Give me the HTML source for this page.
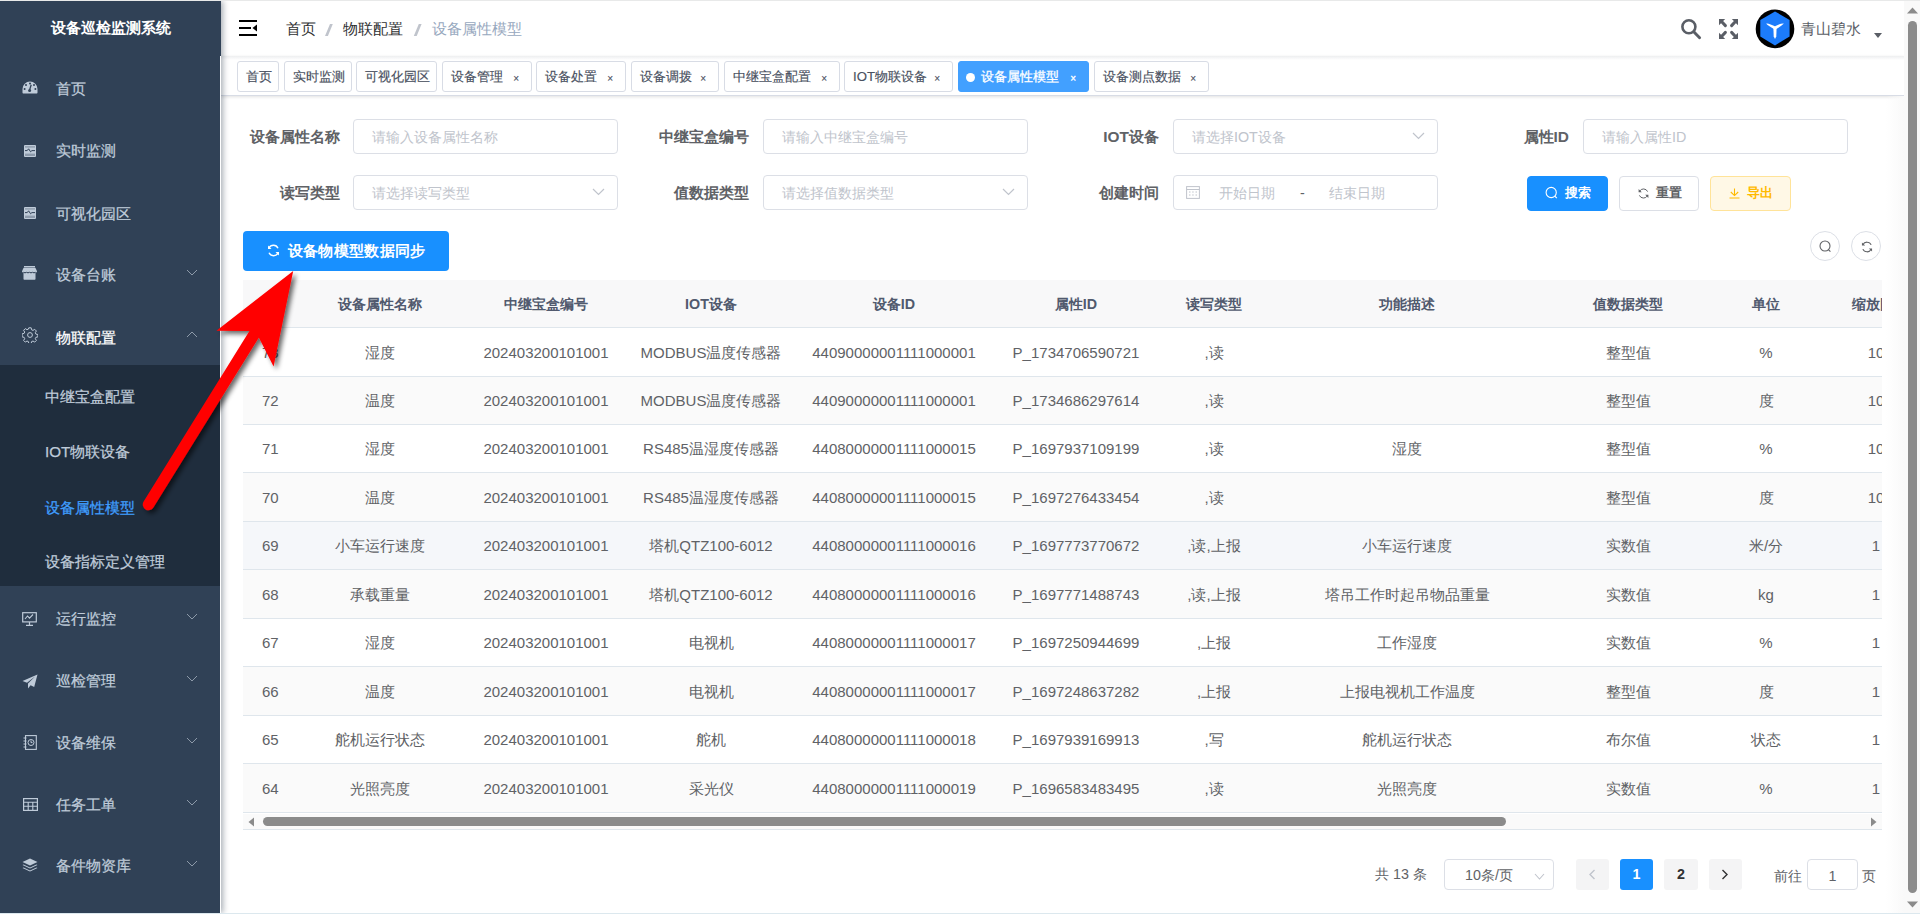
<!DOCTYPE html><html><head><meta charset="utf-8"><title>设备属性模型</title><style>

*{box-sizing:border-box;margin:0;padding:0}
html,body{width:1920px;height:914px;overflow:hidden;background:#fff;font-family:"Liberation Sans", sans-serif;}
.abs{position:absolute}
.t{position:absolute;white-space:nowrap}
#side{position:absolute;left:0;top:1px;width:221px;height:912px;background:#304156;box-shadow:2px 0 6px rgba(0,21,41,.35);z-index:2;overflow:hidden}
.mi{position:absolute;left:0;width:220px;color:#bfcbd9;font-size:15.2px;height:30px;line-height:30px;-webkit-text-stroke:0.25px currentColor}
.mi .tx{position:absolute;left:56px;top:0;white-space:nowrap}
.mi svg.ic{position:absolute;left:22px}
.mi svg.arr{position:absolute;left:186px}
.sub{position:absolute;left:45px;color:#bfcbd9;font-size:15.2px;white-space:nowrap;height:30px;line-height:30px;-webkit-text-stroke:0.25px currentColor}
.tab{position:absolute;top:61px;height:31px;border:1px solid #d8dce5;border-radius:3px;background:#fff;color:#495060;font-size:13.2px;line-height:29px;-webkit-text-stroke:0.15px currentColor;white-space:nowrap;padding-left:8px}
.tab .x{position:absolute;top:2px;font-size:10px;color:#495060}
.lbl{position:absolute;color:#606266;font-weight:bold;font-size:15.4px;white-space:nowrap;text-align:right;height:30px;line-height:30px}
.inp{position:absolute;height:35px;border:1px solid #dcdfe6;border-radius:4px;background:#fff;color:#c0c4cc;font-size:14.3px;line-height:35px;padding-left:18px;white-space:nowrap}
.btn{position:absolute;top:176px;height:35px;border-radius:4px;font-size:13.2px;font-weight:bold;line-height:32px;white-space:nowrap}
.th{position:absolute;color:#515a6e;font-weight:bold;font-size:14.3px;white-space:nowrap;text-align:center;height:30px;line-height:30px}
.td{position:absolute;color:#606266;font-size:15px;white-space:nowrap;text-align:center;height:30px;line-height:30px}
.pg{position:absolute;top:859px;height:31px;border-radius:3px;background:#f4f4f5;color:#303133;font-weight:bold;font-size:14.3px;line-height:31px;text-align:center}

</style></head><body>
<div class="abs" style="left:0;top:0;width:1920px;height:1px;background:#e8e9e9;z-index:5"></div>
<div class="abs" style="left:0;top:913px;width:1920px;height:1px;background:#dce8ee;z-index:5"></div>
<div id="side">
<div class="t" style="left:0;width:221px;top:0;height:54px;line-height:54px;text-align:center;color:#fff;font-weight:bold;font-size:15.4px">设备巡检监测系统</div>
<div class="abs" style="left:0;top:363.5px;width:220px;height:221px;background:#1f2d3d"></div>
<div class="mi" style="top:73.0px;color:#bfcbd9"><svg class="ic" width="16" height="13" viewBox="0 0 16 13" style="top:7px"><path d="M8 0.5A7.5 7.5 0 0 0 0.5 8v3.5c0 .6.4 1 1 1h13c.6 0 1-.4 1-1V8A7.5 7.5 0 0 0 8 0.5z" fill="#bfcbd9"/><path d="M9.2 3.8L7.6 9" stroke="#304156" stroke-width="1.3"/><circle cx="7.6" cy="9.6" r="1.5" fill="#304156"/><circle cx="2.6" cy="8" r="1" fill="#304156"/><circle cx="13.4" cy="8" r="1" fill="#304156"/><circle cx="4" cy="4" r="1" fill="#304156"/><circle cx="12" cy="4" r="1" fill="#304156"/><circle cx="8" cy="2.4" r="1" fill="#304156"/></svg><span class="tx">首页</span></div>
<div class="mi" style="top:135.0px;color:#bfcbd9"><svg class="ic" width="12" height="12" viewBox="0 0 12 12" style="top:8.8px;left:24px"><rect x="0" y="0" width="12" height="12" rx="1" fill="#bfcbd9"/><rect x="1" y="1.6" width="10" height="0.7" fill="#304156" opacity=".7"/><path d="M1 5.6h2.2l1.4-1.8 2 3 1.3-1.2H11" stroke="#304156" stroke-width="1" fill="none"/><rect x="1" y="8.6" width="10" height="2.4" fill="#8d9aab"/></svg><span class="tx">实时监测</span></div>
<div class="mi" style="top:197.6px;color:#bfcbd9"><svg class="ic" width="12" height="12" viewBox="0 0 12 12" style="top:8.8px;left:24px"><rect x="0" y="0" width="12" height="12" rx="1" fill="#bfcbd9"/><rect x="1" y="1.6" width="10" height="0.7" fill="#304156" opacity=".7"/><path d="M1 5.6h2.2l1.4-1.8 2 3 1.3-1.2H11" stroke="#304156" stroke-width="1" fill="none"/><rect x="1" y="8.6" width="10" height="2.4" fill="#8d9aab"/></svg><span class="tx">可视化园区</span></div>
<div class="mi" style="top:259.0px;color:#bfcbd9"><svg class="ic" width="15" height="14" viewBox="0 0 15 14" style="top:6px"><path d="M2 0h11v1.4H2z" fill="#bfcbd9"/><path d="M1.6 1.8h11.8L15 5.2v1H0v-1z" fill="#bfcbd9"/><path d="M1.5 6.2h12v6.8c0 .4-.3.7-.7.7H2.2c-.4 0-.7-.3-.7-.7z" fill="#bfcbd9"/><path d="M1.5 6.2q1.5 1.8 3 0q1.5 1.8 3 0q1.5 1.8 3 0q1.5 1.8 3 0" fill="#304156" stroke="#304156" stroke-width=".6"/></svg><span class="tx">设备台账</span><svg class="arr" width="12" height="7" viewBox="0 0 12 7" style="top:9px"><path d="M1 1l5 5 5-5" fill="none" stroke="#8d9aa9" stroke-width="1"/></svg></div>
<div class="mi" style="top:321.5px;color:#fff"><svg class="ic" width="16" height="16" viewBox="0 0 16 16" style="top:4.5px"><path d="M6.8 0.8h2.4l.4 2 1.4.6 1.7-1.1 1.7 1.7-1.1 1.7.6 1.4 2 .4v2.4l-2 .4-.6 1.4 1.1 1.7-1.7 1.7-1.7-1.1-1.4.6-.4 2H6.8l-.4-2-1.4-.6-1.7 1.1-1.7-1.7 1.1-1.7-.6-1.4-2-.4V6.8l2-.4.6-1.4-1.1-1.7 1.7-1.7 1.7 1.1 1.4-.6z" fill="none" stroke="#bfcbd9" stroke-width="1" stroke-linejoin="round"/><circle cx="8" cy="8" r="2.4" fill="none" stroke="#bfcbd9" stroke-width="1"/></svg><span class="tx">物联配置</span><svg class="arr" width="12" height="7" viewBox="0 0 12 7" style="top:8px"><path d="M1 6l5-5 5 5" fill="none" stroke="#8d9aa9" stroke-width="1"/></svg></div>
<div class="mi" style="top:603.0px;color:#bfcbd9"><svg class="ic" width="15" height="14" viewBox="0 0 15 14" style="top:8px"><rect x="0.7" y="0.7" width="13.6" height="9.2" fill="none" stroke="#bfcbd9" stroke-width="1.2"/><path d="M3 7l2.5-3 2 2.2L11 2.5" fill="none" stroke="#bfcbd9" stroke-width="1.1"/><path d="M7.5 10v3M4 13.3h7" stroke="#bfcbd9" stroke-width="1.2"/></svg><span class="tx">运行监控</span><svg class="arr" width="12" height="7" viewBox="0 0 12 7" style="top:9px"><path d="M1 1l5 5 5-5" fill="none" stroke="#8d9aa9" stroke-width="1"/></svg></div>
<div class="mi" style="top:665.0px;color:#bfcbd9"><svg class="ic" width="16" height="15" viewBox="0 0 16 15" style="top:7.5px"><path d="M15.5 0.5L0.5 7l4.5 1.8L13 2.5 6 9.5v5l2.6-3.3 3.6 1.8z" fill="#bfcbd9"/></svg><span class="tx">巡检管理</span><svg class="arr" width="12" height="7" viewBox="0 0 12 7" style="top:9px"><path d="M1 1l5 5 5-5" fill="none" stroke="#8d9aa9" stroke-width="1"/></svg></div>
<div class="mi" style="top:727.0px;color:#bfcbd9"><svg class="ic" width="14" height="15" viewBox="0 0 14 15" style="top:7px;left:23px"><rect x="2.5" y="0.6" width="10.8" height="13.8" fill="none" stroke="#bfcbd9" stroke-width="1.1"/><path d="M0.5 3h3M0.5 6h3M0.5 9h3M0.5 12h3" stroke="#bfcbd9" stroke-width="1"/><circle cx="8" cy="7.5" r="3" fill="none" stroke="#bfcbd9" stroke-width="1"/><path d="M8 5.6v2h1.5" stroke="#bfcbd9" stroke-width="1" fill="none"/></svg><span class="tx">设备维保</span><svg class="arr" width="12" height="7" viewBox="0 0 12 7" style="top:9px"><path d="M1 1l5 5 5-5" fill="none" stroke="#8d9aa9" stroke-width="1"/></svg></div>
<div class="mi" style="top:789.0px;color:#bfcbd9"><svg class="ic" width="15" height="13" viewBox="0 0 15 13" style="top:8px;left:22.5px"><rect x="0.6" y="0.6" width="13.8" height="11.8" fill="none" stroke="#bfcbd9" stroke-width="1.2"/><path d="M0.6 4.2h13.8M0.6 8.2h13.8M5.2 4.2v8.2M9.8 4.2v8.2" stroke="#bfcbd9" stroke-width="1.1"/></svg><span class="tx">任务工单</span><svg class="arr" width="12" height="7" viewBox="0 0 12 7" style="top:9px"><path d="M1 1l5 5 5-5" fill="none" stroke="#8d9aa9" stroke-width="1"/></svg></div>
<div class="mi" style="top:850.0px;color:#bfcbd9"><svg class="ic" width="16" height="15" viewBox="0 0 16 15" style="top:7px"><path d="M8 0.5l7.5 3.5L8 7.5 0.5 4z" fill="#bfcbd9"/><path d="M1.6 6.4L8 9.4l6.4-3 1.1.6L8 10.5 0.5 7z" fill="#bfcbd9"/><path d="M1.6 9.4L8 12.4l6.4-3 1.1.6L8 13.5 0.5 10z" fill="#bfcbd9"/></svg><span class="tx">备件物资库</span><svg class="arr" width="12" height="7" viewBox="0 0 12 7" style="top:9px"><path d="M1 1l5 5 5-5" fill="none" stroke="#8d9aa9" stroke-width="1"/></svg></div>
<div class="sub" style="top:381.0px;color:#bfcbd9">中继宝盒配置</div>
<div class="sub" style="top:436.0px;color:#bfcbd9">IOT物联设备</div>
<div class="sub" style="top:491.5px;color:#409eff">设备属性模型</div>
<div class="sub" style="top:546.0px;color:#bfcbd9">设备指标定义管理</div>
<div class="abs" style="left:220px;top:55px;width:1px;height:860px;background:#fff"></div>
</div>
<svg class="abs" style="left:239px;top:20px" width="18" height="16" viewBox="0 0 18 16"><rect x="0" y="0" width="18" height="2" fill="#000"/><rect x="0" y="7" width="12" height="2" fill="#000"/><rect x="0" y="14" width="18" height="2" fill="#000"/><path d="M18 4.5v7L13.5 8z" fill="#000"/></svg>
<div class="t" style="left:286px;top:14px;height:30px;line-height:30px;font-size:15.4px;color:#303133">首页</div>
<svg class="abs" style="left:0;top:0" width="440" height="40"><path d="M330 24h2.8L327.9 36H325z" fill="#c0c4cc"/><path d="M418.8 24h2.8L416.7 36H413.8z" fill="#c0c4cc"/></svg>
<div class="t" style="left:343px;top:14px;height:30px;line-height:30px;font-size:15.4px;color:#303133">物联配置</div>
<div class="t" style="left:431.5px;top:14px;height:30px;line-height:30px;font-size:15.4px;color:#97a8be">设备属性模型</div>
<svg class="abs" style="left:1679px;top:17px" width="24" height="24" viewBox="0 0 24 24"><circle cx="9.9" cy="9.8" r="6.5" fill="none" stroke="#5a5e66" stroke-width="2.6"/><path d="M15 15l5.6 5.8" stroke="#5a5e66" stroke-width="2.9" stroke-linecap="round"/></svg>
<svg class="abs" style="left:1719px;top:19px" width="19" height="20" viewBox="0 0 19 20"><g fill="#5a5e66"><path d="M0 0h6.2L0 6.2z"/><path d="M19 0h-6.2l6.2 6.2z"/><path d="M0 20v-6.2l6.2 6.2z"/><path d="M19 20v-6.2l-6.2 6.2z"/></g><g stroke="#5a5e66" stroke-width="3" stroke-linecap="round"><path d="M3 3l3.4 3.6"/><path d="M16 3l-3.4 3.6"/><path d="M3 17l3.4-3.6"/><path d="M16 17l-3.4-3.6"/></g></svg>
<svg class="abs" style="left:1755px;top:8.5px" width="40" height="40" viewBox="0 0 40 40"><circle cx="20" cy="19.9" r="19.3" fill="#000"/><path d="M20 2.4L34.6 10.9V27.5L20 36.4 5.3 27.5V10.9z" fill="#1c7cfb"/><path d="M11.2 14.5Q13.5 13.8 21.2 17.9L20.3 20.8Q12.5 16.5 11.2 14.5z" fill="#fff"/><path d="M28.8 14.5Q26.5 13.8 18.8 17.9L19.7 20.8Q27.5 16.5 28.8 14.5z" fill="#fff"/><path d="M18.4 19h3.2L21.3 27.6 20 30 18.7 27.6z" fill="#fff"/></svg>
<div class="t" style="left:1801px;top:14px;height:30px;line-height:30px;font-size:15.4px;color:#5a5e66">青山碧水</div>
<svg class="abs" style="left:1873.5px;top:33px" width="8" height="5" viewBox="0 0 8 5"><path d="M0 0h8L4 5z" fill="#5a5e66"/></svg>
<div class="abs" style="left:221px;top:56px;width:1683px;height:4px;background:linear-gradient(rgba(0,21,41,.07),rgba(0,21,41,0));z-index:1"></div>
<div class="abs" style="left:221px;top:56px;width:1683px;height:40px;background:#fff;border-bottom:1px solid #d8dce5;box-shadow:0 1px 3px 0 rgba(0,0,0,.12)"></div>
<div class="tab" style="left:237px;width:42px">首页</div>
<div class="tab" style="left:284px;width:68px">实时监测</div>
<div class="tab" style="left:356px;width:81px">可视化园区</div>
<div class="tab" style="left:442px;width:90px">设备管理<span class="x" style="right:12px">×</span></div>
<div class="tab" style="left:536px;width:90px">设备处置<span class="x" style="right:12px">×</span></div>
<div class="tab" style="left:631px;width:88px">设备调拨<span class="x" style="right:12px">×</span></div>
<div class="tab" style="left:724px;width:116px">中继宝盒配置<span class="x" style="right:12px">×</span></div>
<div class="tab" style="left:844px;width:109px">IOT物联设备<span class="x" style="right:12px">×</span></div>
<div class="tab" style="left:958px;width:131px;background:#42a0ff;border-color:#42a0ff;color:#fff;padding-left:22px;-webkit-text-stroke:0.3px #fff"><span class="abs" style="left:7px;top:11px;width:9px;height:9px;border-radius:50%;background:#fff"></span>设备属性模型<span class="x" style="right:12px;color:#fff">×</span></div>
<div class="tab" style="left:1094px;width:115px">设备测点数据<span class="x" style="right:12px">×</span></div>
<div class="lbl" style="left:140px;width:200px;top:121.5px">设备属性名称</div>
<div class="inp" style="left:353px;width:265px;top:119.0px">请输入设备属性名称</div>
<div class="lbl" style="left:549px;width:200px;top:121.5px">中继宝盒编号</div>
<div class="inp" style="left:763px;width:265px;top:119.0px">请输入中继宝盒编号</div>
<div class="lbl" style="left:959px;width:200px;top:121.5px">IOT设备</div>
<div class="inp" style="left:1173px;width:265px;top:119.0px">请选择IOT设备<svg class="abs" style="right:12px;top:12px" width="13" height="8" viewBox="0 0 13 8"><path d="M1 1l5.5 5.5L12 1" fill="none" stroke="#c0c4cc" stroke-width="1.2"/></svg></div>
<div class="lbl" style="left:1369px;width:200px;top:121.5px">属性ID</div>
<div class="inp" style="left:1583px;width:265px;top:119.0px">请输入属性ID</div>
<div class="lbl" style="left:140px;width:200px;top:177.5px">读写类型</div>
<div class="inp" style="left:353px;width:265px;top:175.0px">请选择读写类型<svg class="abs" style="right:12px;top:12px" width="13" height="8" viewBox="0 0 13 8"><path d="M1 1l5.5 5.5L12 1" fill="none" stroke="#c0c4cc" stroke-width="1.2"/></svg></div>
<div class="lbl" style="left:549px;width:200px;top:177.5px">值数据类型</div>
<div class="inp" style="left:763px;width:265px;top:175.0px">请选择值数据类型<svg class="abs" style="right:12px;top:12px" width="13" height="8" viewBox="0 0 13 8"><path d="M1 1l5.5 5.5L12 1" fill="none" stroke="#c0c4cc" stroke-width="1.2"/></svg></div>
<div class="lbl" style="left:959px;width:200px;top:177.5px">创建时间</div>
<div class="inp" style="left:1173px;width:265px;top:175.0px;padding-left:0"><svg class="abs" style="left:11.5px;top:9px" width="14" height="14" viewBox="0 0 14 14"><rect x="0.6" y="1.6" width="12.8" height="11.8" fill="none" stroke="#c0c4cc" stroke-width="1"/><path d="M0.6 4.5h12.8" stroke="#c0c4cc"/><path d="M3 7h1.5M6.2 7h1.5M9.5 7h1.5M3 10h1.5M6.2 10h1.5M9.5 10h1.5" stroke="#c0c4cc"/></svg><span class="abs" style="left:45px;top:0">开始日期</span><span class="abs" style="left:126px;top:0;color:#606266">-</span><span class="abs" style="left:155px;top:0">结束日期</span></div>
<div class="btn" style="left:1527px;width:81px;background:#1890ff;border:1px solid #1890ff;color:#fff;padding-left:36.5px"><svg class="abs" style="left:16px;top:8px" width="16" height="16" viewBox="0 0 16 16"><circle cx="7.2" cy="7.5" r="5.1" fill="none" stroke="#fff" stroke-width="1.1"/><path d="M10.8 11.2l2 2" stroke="#fff" stroke-width="1.2"/></svg>搜索</div>
<div class="btn" style="left:1619px;width:80px;background:#fff;border:1px solid #dcdfe6;color:#606266;padding-left:35.5px"><svg class="abs" style="left:17.5px;top:10.5px" width="11" height="11" viewBox="0 0 11 11"><path d="M9.6 3.6A4.5 4.5 0 0 0 1.6 3.2M1.4 7.4A4.5 4.5 0 0 0 9.4 7.8" fill="none" stroke="#606266" stroke-width="1"/><path d="M0.6 1v3.2h3.2z" fill="#606266"/><path d="M10.4 10V6.8H7.2z" fill="#606266"/></svg>重置</div>
<div class="btn" style="left:1710px;width:81px;background:#fff8e6;border:1px solid #ffe399;color:#ffba00;padding-left:35.5px"><svg class="abs" style="left:17.5px;top:11px" width="11" height="11" viewBox="0 0 11 11"><path d="M5.5 0.5v6.8M1.8 4l3.7 3.6L9.2 4M0.5 10h10" fill="none" stroke="#ffba00" stroke-width="1.1"/></svg>导出</div>
<div class="abs" style="left:243px;top:231px;width:206px;height:40px;background:#1890ff;border-radius:4px;color:#fff;font-size:15px;font-weight:bold;line-height:40px;padding-left:44.5px;letter-spacing:0.35px;white-space:nowrap"><svg class="abs" style="left:24px;top:13px" width="13" height="13" viewBox="0 0 13 13"><path d="M11 4.2A5 5 0 0 0 2 4M2 8.8A5 5 0 0 0 11 9" fill="none" stroke="#fff" stroke-width="1.4"/><path d="M1 1.5v3.5h3.5z" fill="#fff"/><path d="M12 11.5V8H8.5z" fill="#fff"/></svg>设备物模型数据同步</div>
<div class="abs" style="left:1810px;top:231px;width:30px;height:30px;border:1px solid #dcdfe6;border-radius:50%;background:#fff"><svg class="abs" style="left:8px;top:8px" width="13" height="13" viewBox="0 0 13 13"><circle cx="6" cy="6" r="5" fill="none" stroke="#606266" stroke-width="1.1"/><path d="M9.4 9.6l2 2" stroke="#606266" stroke-width="1.1"/></svg></div>
<div class="abs" style="left:1851px;top:231px;width:30px;height:30px;border:1px solid #dcdfe6;border-radius:50%;background:#fff"><svg class="abs" style="left:8.5px;top:8.5px" width="12" height="12" viewBox="0 0 13 13"><path d="M11 4.2A5 5 0 0 0 2 4M2 8.8A5 5 0 0 0 11 9" fill="none" stroke="#606266" stroke-width="1.2"/><path d="M1 1.5v3.5h3.5z" fill="#606266"/><path d="M12 11.5V8H8.5z" fill="#606266"/></svg></div>
<div class="abs" style="left:243px;top:280px;width:1639px;height:550px;overflow:hidden">
<div class="abs" style="left:0;top:0;width:1639px;height:48px;background:#f8f8f9;border-bottom:1px solid #dfe6ec"></div>
<div class="th" style="left:37px;width:200px;top:8.5px">设备属性名称</div>
<div class="th" style="left:203px;width:200px;top:8.5px">中继宝盒编号</div>
<div class="th" style="left:368px;width:200px;top:8.5px">IOT设备</div>
<div class="th" style="left:551px;width:200px;top:8.5px">设备ID</div>
<div class="th" style="left:733px;width:200px;top:8.5px">属性ID</div>
<div class="th" style="left:871px;width:200px;top:8.5px">读写类型</div>
<div class="th" style="left:1064px;width:200px;top:8.5px">功能描述</div>
<div class="th" style="left:1285px;width:200px;top:8.5px">值数据类型</div>
<div class="th" style="left:1423px;width:200px;top:8.5px">单位</div>
<div class="th" style="left:1537px;width:200px;top:8.5px">缩放因子</div>
<div class="abs" style="left:0;top:48px;width:1639px;height:49px;background:#fff;border-bottom:1px solid #dfe6ec"></div>
<div class="td" style="left:19px;top:57.5px;text-align:left">73</div>
<div class="td" style="left:37px;width:200px;top:57.5px">湿度</div>
<div class="td" style="left:203px;width:200px;top:57.5px">202403200101001</div>
<div class="td" style="left:368px;width:200px;top:57.5px">MODBUS温度传感器</div>
<div class="td" style="left:551px;width:200px;top:57.5px">44090000001111000001</div>
<div class="td" style="left:733px;width:200px;top:57.5px">P_1734706590721</div>
<div class="td" style="left:871px;width:200px;top:57.5px">,读</div>
<div class="td" style="left:1285px;width:200px;top:57.5px">整型值</div>
<div class="td" style="left:1423px;width:200px;top:57.5px">%</div>
<div class="td" style="left:1533px;width:200px;top:57.5px">10</div>
<div class="abs" style="left:0;top:97px;width:1639px;height:48px;background:#fafafa;border-bottom:1px solid #dfe6ec"></div>
<div class="td" style="left:19px;top:106.0px;text-align:left">72</div>
<div class="td" style="left:37px;width:200px;top:106.0px">温度</div>
<div class="td" style="left:203px;width:200px;top:106.0px">202403200101001</div>
<div class="td" style="left:368px;width:200px;top:106.0px">MODBUS温度传感器</div>
<div class="td" style="left:551px;width:200px;top:106.0px">44090000001111000001</div>
<div class="td" style="left:733px;width:200px;top:106.0px">P_1734686297614</div>
<div class="td" style="left:871px;width:200px;top:106.0px">,读</div>
<div class="td" style="left:1285px;width:200px;top:106.0px">整型值</div>
<div class="td" style="left:1423px;width:200px;top:106.0px">度</div>
<div class="td" style="left:1533px;width:200px;top:106.0px">10</div>
<div class="abs" style="left:0;top:145px;width:1639px;height:48px;background:#fff;border-bottom:1px solid #dfe6ec"></div>
<div class="td" style="left:19px;top:154.0px;text-align:left">71</div>
<div class="td" style="left:37px;width:200px;top:154.0px">湿度</div>
<div class="td" style="left:203px;width:200px;top:154.0px">202403200101001</div>
<div class="td" style="left:368px;width:200px;top:154.0px">RS485温湿度传感器</div>
<div class="td" style="left:551px;width:200px;top:154.0px">44080000001111000015</div>
<div class="td" style="left:733px;width:200px;top:154.0px">P_1697937109199</div>
<div class="td" style="left:871px;width:200px;top:154.0px">,读</div>
<div class="td" style="left:1064px;width:200px;top:154.0px">湿度</div>
<div class="td" style="left:1285px;width:200px;top:154.0px">整型值</div>
<div class="td" style="left:1423px;width:200px;top:154.0px">%</div>
<div class="td" style="left:1533px;width:200px;top:154.0px">10</div>
<div class="abs" style="left:0;top:193px;width:1639px;height:49px;background:#fafafa;border-bottom:1px solid #dfe6ec"></div>
<div class="td" style="left:19px;top:202.5px;text-align:left">70</div>
<div class="td" style="left:37px;width:200px;top:202.5px">温度</div>
<div class="td" style="left:203px;width:200px;top:202.5px">202403200101001</div>
<div class="td" style="left:368px;width:200px;top:202.5px">RS485温湿度传感器</div>
<div class="td" style="left:551px;width:200px;top:202.5px">44080000001111000015</div>
<div class="td" style="left:733px;width:200px;top:202.5px">P_1697276433454</div>
<div class="td" style="left:871px;width:200px;top:202.5px">,读</div>
<div class="td" style="left:1285px;width:200px;top:202.5px">整型值</div>
<div class="td" style="left:1423px;width:200px;top:202.5px">度</div>
<div class="td" style="left:1533px;width:200px;top:202.5px">10</div>
<div class="abs" style="left:0;top:242px;width:1639px;height:48px;background:#f5f7fa;border-bottom:1px solid #dfe6ec"></div>
<div class="td" style="left:19px;top:251.0px;text-align:left">69</div>
<div class="td" style="left:37px;width:200px;top:251.0px">小车运行速度</div>
<div class="td" style="left:203px;width:200px;top:251.0px">202403200101001</div>
<div class="td" style="left:368px;width:200px;top:251.0px">塔机QTZ100-6012</div>
<div class="td" style="left:551px;width:200px;top:251.0px">44080000001111000016</div>
<div class="td" style="left:733px;width:200px;top:251.0px">P_1697773770672</div>
<div class="td" style="left:871px;width:200px;top:251.0px">,读,上报</div>
<div class="td" style="left:1064px;width:200px;top:251.0px">小车运行速度</div>
<div class="td" style="left:1285px;width:200px;top:251.0px">实数值</div>
<div class="td" style="left:1423px;width:200px;top:251.0px">米/分</div>
<div class="td" style="left:1533px;width:200px;top:251.0px">1</div>
<div class="abs" style="left:0;top:290px;width:1639px;height:49px;background:#fafafa;border-bottom:1px solid #dfe6ec"></div>
<div class="td" style="left:19px;top:299.5px;text-align:left">68</div>
<div class="td" style="left:37px;width:200px;top:299.5px">承载重量</div>
<div class="td" style="left:203px;width:200px;top:299.5px">202403200101001</div>
<div class="td" style="left:368px;width:200px;top:299.5px">塔机QTZ100-6012</div>
<div class="td" style="left:551px;width:200px;top:299.5px">44080000001111000016</div>
<div class="td" style="left:733px;width:200px;top:299.5px">P_1697771488743</div>
<div class="td" style="left:871px;width:200px;top:299.5px">,读,上报</div>
<div class="td" style="left:1064px;width:200px;top:299.5px">塔吊工作时起吊物品重量</div>
<div class="td" style="left:1285px;width:200px;top:299.5px">实数值</div>
<div class="td" style="left:1423px;width:200px;top:299.5px">kg</div>
<div class="td" style="left:1533px;width:200px;top:299.5px">1</div>
<div class="abs" style="left:0;top:339px;width:1639px;height:48px;background:#fff;border-bottom:1px solid #dfe6ec"></div>
<div class="td" style="left:19px;top:348.0px;text-align:left">67</div>
<div class="td" style="left:37px;width:200px;top:348.0px">湿度</div>
<div class="td" style="left:203px;width:200px;top:348.0px">202403200101001</div>
<div class="td" style="left:368px;width:200px;top:348.0px">电视机</div>
<div class="td" style="left:551px;width:200px;top:348.0px">44080000001111000017</div>
<div class="td" style="left:733px;width:200px;top:348.0px">P_1697250944699</div>
<div class="td" style="left:871px;width:200px;top:348.0px">,上报</div>
<div class="td" style="left:1064px;width:200px;top:348.0px">工作湿度</div>
<div class="td" style="left:1285px;width:200px;top:348.0px">实数值</div>
<div class="td" style="left:1423px;width:200px;top:348.0px">%</div>
<div class="td" style="left:1533px;width:200px;top:348.0px">1</div>
<div class="abs" style="left:0;top:387px;width:1639px;height:49px;background:#fafafa;border-bottom:1px solid #dfe6ec"></div>
<div class="td" style="left:19px;top:396.5px;text-align:left">66</div>
<div class="td" style="left:37px;width:200px;top:396.5px">温度</div>
<div class="td" style="left:203px;width:200px;top:396.5px">202403200101001</div>
<div class="td" style="left:368px;width:200px;top:396.5px">电视机</div>
<div class="td" style="left:551px;width:200px;top:396.5px">44080000001111000017</div>
<div class="td" style="left:733px;width:200px;top:396.5px">P_1697248637282</div>
<div class="td" style="left:871px;width:200px;top:396.5px">,上报</div>
<div class="td" style="left:1064px;width:200px;top:396.5px">上报电视机工作温度</div>
<div class="td" style="left:1285px;width:200px;top:396.5px">整型值</div>
<div class="td" style="left:1423px;width:200px;top:396.5px">度</div>
<div class="td" style="left:1533px;width:200px;top:396.5px">1</div>
<div class="abs" style="left:0;top:436px;width:1639px;height:48px;background:#fff;border-bottom:1px solid #dfe6ec"></div>
<div class="td" style="left:19px;top:445.0px;text-align:left">65</div>
<div class="td" style="left:37px;width:200px;top:445.0px">舵机运行状态</div>
<div class="td" style="left:203px;width:200px;top:445.0px">202403200101001</div>
<div class="td" style="left:368px;width:200px;top:445.0px">舵机</div>
<div class="td" style="left:551px;width:200px;top:445.0px">44080000001111000018</div>
<div class="td" style="left:733px;width:200px;top:445.0px">P_1697939169913</div>
<div class="td" style="left:871px;width:200px;top:445.0px">,写</div>
<div class="td" style="left:1064px;width:200px;top:445.0px">舵机运行状态</div>
<div class="td" style="left:1285px;width:200px;top:445.0px">布尔值</div>
<div class="td" style="left:1423px;width:200px;top:445.0px">状态</div>
<div class="td" style="left:1533px;width:200px;top:445.0px">1</div>
<div class="abs" style="left:0;top:484px;width:1639px;height:49px;background:#fafafa;border-bottom:1px solid #dfe6ec"></div>
<div class="td" style="left:19px;top:493.5px;text-align:left">64</div>
<div class="td" style="left:37px;width:200px;top:493.5px">光照亮度</div>
<div class="td" style="left:203px;width:200px;top:493.5px">202403200101001</div>
<div class="td" style="left:368px;width:200px;top:493.5px">采光仪</div>
<div class="td" style="left:551px;width:200px;top:493.5px">44080000001111000019</div>
<div class="td" style="left:733px;width:200px;top:493.5px">P_1696583483495</div>
<div class="td" style="left:871px;width:200px;top:493.5px">,读</div>
<div class="td" style="left:1064px;width:200px;top:493.5px">光照亮度</div>
<div class="td" style="left:1285px;width:200px;top:493.5px">实数值</div>
<div class="td" style="left:1423px;width:200px;top:493.5px">%</div>
<div class="td" style="left:1533px;width:200px;top:493.5px">1</div>
<div class="abs" style="left:0;top:533.5px;width:1639px;height:16px;background:#fafafa;border-bottom:1px solid #dfe6ec"></div>
<div class="abs" style="left:20px;top:537px;width:1243px;height:9px;border-radius:5px;background:#8b8b8b"></div>
<svg class="abs" style="left:5px;top:537px" width="7" height="10" viewBox="0 0 7 10"><path d="M6 0.5v9L0.5 5z" fill="#8b8b8b"/></svg>
<svg class="abs" style="left:1627px;top:537px" width="7" height="10" viewBox="0 0 7 10"><path d="M1 0.5v9L6.5 5z" fill="#8b8b8b"/></svg>
</div>
<div class="t" style="left:1375px;top:859px;height:31px;line-height:31px;font-size:14.3px;color:#606266">共 13 条</div>
<div class="inp" style="left:1444px;top:859px;width:110px;height:31px;line-height:31px;padding-left:20px;color:#606266;font-size:14.3px">10条/页<svg class="abs" style="right:8px;top:12.5px" width="11" height="8" viewBox="0 0 11 8"><path d="M1 1l4.5 5L10 1" fill="none" stroke="#c0c4cc" stroke-width="1.1"/></svg></div>
<div class="pg" style="left:1576px;width:33px"><svg class="abs" style="left:12px;top:10px" width="8" height="11" viewBox="0 0 8 11"><path d="M6.5 1L2 5.5 6.5 10" fill="none" stroke="#c0c4cc" stroke-width="1.4"/></svg></div>
<div class="pg" style="left:1620px;width:33px;background:#1890ff;color:#fff">1</div>
<div class="pg" style="left:1664px;width:34px">2</div>
<div class="pg" style="left:1709px;width:33px"><svg class="abs" style="left:12px;top:10px" width="8" height="11" viewBox="0 0 8 11"><path d="M1.5 1L6 5.5 1.5 10" fill="none" stroke="#303133" stroke-width="1.4"/></svg></div>
<div class="t" style="left:1774px;top:860.5px;height:31px;line-height:31px;font-size:14.3px;color:#606266">前往</div>
<div class="inp" style="left:1807px;top:859px;width:51px;height:31px;line-height:32px;padding-left:0;text-align:center;color:#606266;font-size:14.3px">1</div>
<div class="t" style="left:1862px;top:860.5px;height:31px;line-height:31px;font-size:14.3px;color:#606266">页</div>
<div class="abs" style="left:1886px;top:96px;width:18px;height:817px;background:linear-gradient(90deg,rgba(248,248,248,0),#f9f9f9)"></div>
<div class="abs" style="left:1904px;top:1px;width:16px;height:912px;background:#f9f9f9"></div>
<svg class="abs" style="left:1907px;top:7px" width="11" height="7" viewBox="0 0 11 7"><path d="M0 6.5L5.5 0.5 11 6.5z" fill="#8b8b8b"/></svg>
<div class="abs" style="left:1908px;top:21px;width:9px;height:872px;border-radius:5px;background:#8b8b8b"></div>
<svg class="abs" style="left:1907px;top:901px" width="11" height="7" viewBox="0 0 11 7"><path d="M0 0.5L5.5 6.5 11 0.5z" fill="#8b8b8b"/></svg>
<svg class="abs" style="left:0;top:0;z-index:10" width="400" height="600" viewBox="0 0 400 600"><defs><filter id="sh" x="-50%" y="-50%" width="200%" height="200%"><feGaussianBlur in="SourceAlpha" stdDeviation="2.5"/><feOffset dx="3" dy="3"/><feComponentTransfer><feFuncA type="linear" slope=".6"/></feComponentTransfer><feMerge><feMergeNode/><feMergeNode in="SourceGraphic"/></feMerge></filter></defs><g filter="url(#sh)"><path d="M148.5 504.5L254 334.5" stroke="#ff0000" stroke-width="11.5" stroke-linecap="round"/><path d="M293.2 271.1L216.4 330.7L249.1 331.1L259.1 338L273.6 366.4z" fill="#ff0000"/></g></svg>
</body></html>
